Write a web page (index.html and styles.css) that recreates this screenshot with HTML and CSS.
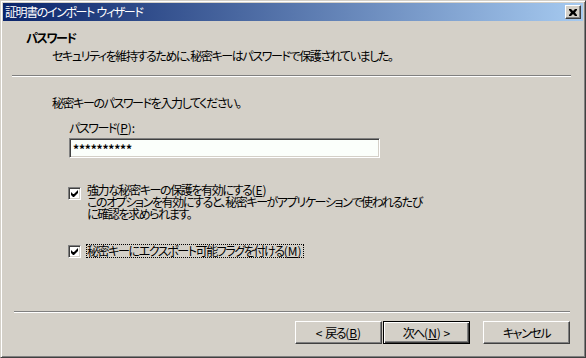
FILE: index.html
```html
<!DOCTYPE html>
<html lang="ja">
    <head>
        <meta charset="utf-8">
        <title>証明書のインポート ウィザード</title>
        <link rel="stylesheet" href="styles.css">
    </head>
    <body>
        <div class="window">
            <div class="titlebar">
                <span class="caption">証明書のインポート<span class="lat"> </span>ウィザード</span>
                <button type="button" class="close">
                    <svg width="8" height="7" viewBox="0 0 8 7">
                        <path d="M0 0h2l2 2 2-2h2v1l-2 2.5 2 2.5v1h-2l-2-2-2 2h-2v-1l2-2.5-2-2.5z" fill="#000"/>
                    </svg>
                </button>
            </div>

            <div class="header">
                <div class="heading">パスワード</div>
                <div class="subheading">セキュリティを維持するために、秘密キーはパスワードで保護されていました。</div>
            </div>
            <div class="rule top-rule"></div>

            <div class="content">
                <p class="intro">秘密キーのパスワードを入力してください。</p>
                <label class="field-label" for="pw">パスワード<span class="lat">(<u>P</u>):</span></label>
                <input class="field" id="pw" type="text" value="**********">

                <div class="option first">
                    <span class="check">
                        <svg width="7" height="7" viewBox="0 0 7 7"><path d="M0 2v3l2 2h1l4-4v-3l-4 4h-1l-2-2z" fill="#000"/></svg>
                    </span>
                    <div class="option-text">
                        <div>強力な秘密キーの保護を有効にする<span class="lat">(<u>E</u>)</span></div>
                        <div>このオプションを有効にすると、秘密キーがアプリケーションで使われるたび</div>
                        <div>に確認を求められます。</div>
                    </div>
                </div>

                <div class="option second">
                    <span class="check">
                        <svg width="7" height="7" viewBox="0 0 7 7"><path d="M0 2v3l2 2h1l4-4v-3l-4 4h-1l-2-2z" fill="#000"/></svg>
                    </span>
                    <div class="option-text focused">秘密キーにエクスポート可能フラグを付ける<span class="lat">(<u>M</u>)</span></div>
                </div>
            </div>

            <div class="rule bottom-rule"></div>
            <div class="buttons">
                <button type="button" class="btn"><span class="lat">&lt; </span>戻る<span class="lat">(<u>B</u>)</span></button>
                <button type="button" class="btn default">次へ<span class="lat">(<u>N</u>) &gt;</span></button>
                <button type="button" class="btn cancel">キャンセル</button>
            </div>
        </div>
    </body>
</html>
```

FILE: styles.css
```css
body {
    margin: 0;
    background: #d4d0c8;
    font-family: "Noto Sans CJK JP", "Noto Sans", sans-serif;
    font-size: 12px;
    font-feature-settings: "palt";
    letter-spacing: -1.4px;
    color: #000;
}
u {
    text-decoration: underline;
    text-underline-offset: 1px;
}
.lat {
    letter-spacing: 0;
}
.window {
    box-sizing: border-box;
    width: 586px;
    height: 358px;
    display: flex;
    flex-direction: column;
    padding: 2px;
    border: 1px solid;
    border-color: #d4d0c8 #404040 #404040 #d4d0c8;
    box-shadow: inset 1px 1px #fff, inset -1px -1px #808080;
    background: #d4d0c8;
}
.titlebar {
    height: 18px;
    display: flex;
    align-items: center;
    padding-left: 2px;
    background: linear-gradient(to right, #0a246a, #a6caf0);
    color: #fff;
    line-height: 14px;
}
.caption {
    flex: 1;
}
.close {
    box-sizing: border-box;
    width: 16px;
    height: 14px;
    margin-right: 2px;
    padding: 0;
    display: flex;
    align-items: center;
    justify-content: center;
    background: #d4d0c8;
    border: 1px solid;
    border-color: #fff #404040 #404040 #fff;
    box-shadow: inset -1px -1px #808080;
}
.header {
    height: 54px;
    box-sizing: border-box;
    padding: 10px 0 0 23px;
    line-height: 14px;
}
.heading {
    font-weight: bold;
}
.subheading {
    margin: 4px 0 0 26px;
}
.rule {
    height: 0;
    border-top: 1px solid #808080;
    border-bottom: 1px solid #fff;
}
.top-rule {
    margin: 0 12px 0 9px;
}
.content {
    flex: 1;
    display: flex;
    flex-direction: column;
    align-items: flex-start;
    padding-left: 49px;
    line-height: 14px;
}
.intro {
    margin: 19px 0 0;
}
.field-label {
    margin: 11px 0 0 17px;
}
.field {
    box-sizing: border-box;
    width: 311px;
    height: 20px;
    margin: 3px 0 0 17px;
    padding: 0 3px;
    font: inherit;
    font-weight: bold;
    letter-spacing: -0.2px;
    background: #fbfffb;
    border: 1px solid;
    border-color: #808080 #fff #fff #808080;
    box-shadow: inset 1px 1px #404040, inset -1px -1px #d4d0c8;
    outline: none;
}
.option {
    display: flex;
    align-items: flex-start;
    gap: 6px;
    margin-left: 16px;
}
.option.first {
    margin-top: 26px;
}
.option.second {
    margin-top: 24px;
}
.check {
    box-sizing: border-box;
    width: 13px;
    height: 13px;
    flex: none;
    display: flex;
    align-items: center;
    justify-content: center;
    background: #fff;
    border: 1px solid;
    border-color: #808080 #fff #fff #808080;
    box-shadow: inset 1px 1px #404040, inset -1px -1px #d4d0c8;
}
.first .check {
    margin-top: 3px;
}
.second .check {
    margin-top: 1px;
}
.option-text {
    line-height: 12px;
}
.option-text.focused {
    border: 1px dotted #000;
    padding: 0 1px 0 0;
    margin-left: -1px;
}
.bottom-rule {
    margin: 0 13px 0 11px;
}
.buttons {
    display: flex;
    justify-content: flex-end;
    gap: 1px;
    height: 23px;
    margin: 8px 13px 11px 0;
}
.btn {
    box-sizing: border-box;
    width: 87px;
    height: 23px;
    padding: 0;
    font: inherit;
    letter-spacing: inherit;
    color: #000;
    background: #d4d0c8;
    border: 1px solid;
    border-color: #fff #404040 #404040 #fff;
    box-shadow: inset -1px -1px #808080;
}
.btn.default {
    border-color: #000;
    box-shadow: inset 1px 1px #fff, inset -1px -1px #404040, inset -2px -2px #808080;
}
.btn.cancel {
    margin-left: 12px;
}
```
